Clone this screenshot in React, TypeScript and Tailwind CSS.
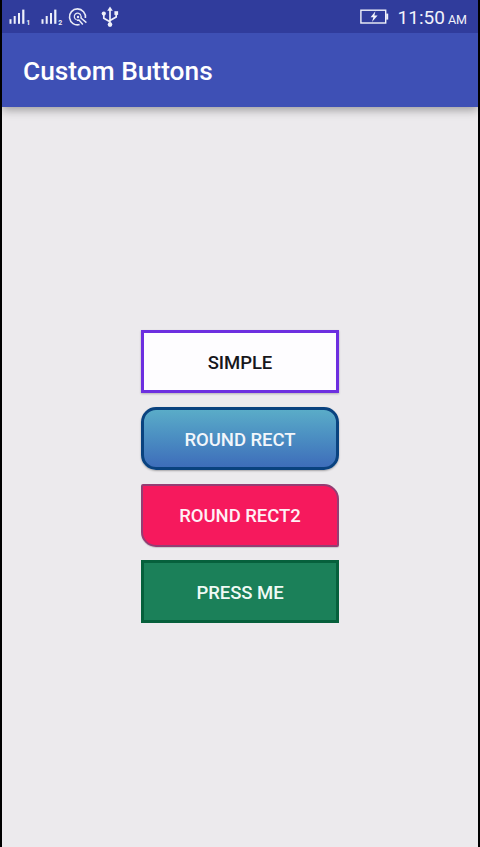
import React from "react";

function Signal({ slot }: { slot: string }) {
  return (
    <svg width="22" height="20" viewBox="0 0 22 20" className="block" fill="#eef0fa">
      <rect x="0.5" y="12.2" width="2" height="4.6" />
      <rect x="4.7" y="9" width="2" height="7.8" />
      <rect x="9" y="6" width="2" height="10.8" />
      <rect x="13.2" y="2.6" width="2.2" height="14.2" />
      <text x="17.2" y="17.8" fontSize="7" fontWeight="700" fontFamily="Roboto, sans-serif">
        {slot}
      </text>
    </svg>
  );
}

function CircleCursor() {
  return (
    <svg width="20" height="20" viewBox="0 0 20 20" className="block" fill="none" stroke="#e8eaf6">
      <path d="M11.6 17.6A8 8 0 1 1 17.4 11" strokeWidth="1.6" />
      <path d="M8.6 12.8A3.4 3.4 0 1 1 13 8.8" strokeWidth="1.2" />
      <circle cx="10" cy="10" r="1.2" fill="#e8eaf6" stroke="none" />
      <path d="M8.8 13.2L11 13L14.8 17.6M13.2 9.2L13 11L18.4 15.6" strokeWidth="1.5" />
    </svg>
  );
}

function Usb() {
  return (
    <svg width="18" height="22" viewBox="0 0 18 22" className="block" fill="#eef0fa" stroke="#eef0fa">
      <path d="M9 3V18M9 15.8L2.8 12.2V8M9 14.6L15.2 11V7" fill="none" strokeWidth="1.7" />
      <path d="M9 0.6L11.8 4.8H6.2Z" stroke="none" />
      <circle cx="2.8" cy="7.6" r="2.1" stroke="none" />
      <rect x="13.4" y="5.2" width="3.7" height="3.7" stroke="none" />
      <circle cx="9" cy="18.6" r="2.3" stroke="none" />
    </svg>
  );
}

function Battery() {
  return (
    <svg width="29" height="16" viewBox="0 0 29 16" className="block" fill="#f1f2fa">
      <rect x="0.9" y="1.2" width="24.8" height="12.8" fill="none" stroke="#f1f2fa" strokeWidth="1.4" />
      <rect x="26.2" y="4.6" width="2" height="6" />
      <path d="M15.4 2.2L10.6 8.3H13.4L12 13.1L17.6 6.4H14.4Z" />
    </svg>
  );
}

const base = "box-border block h-[63px] w-[198px] pt-[2px] text-center text-[18.5px] font-medium leading-[56px] tracking-[-0.05px]";

export default function App() {
  return (
    <div className="flex h-[847px] w-[480px] flex-col overflow-hidden border-x-2 border-black bg-[#eceaed] font-['Roboto',sans-serif]">
      <header className="shrink-0 shadow-[0_3px_9px_rgba(0,0,0,0.34)]">
        <div className="flex h-[33px] items-center justify-between bg-[#303c9c] pl-[7px] pr-[11px] text-[#f1f2fa]">
          <div className="flex items-center">
            <Signal slot="1" />
            <div className="w-[10px]" />
            <Signal slot="2" />
            <div className="w-[5px]" />
            <CircleCursor />
            <div className="w-[13px]" />
            <Usb />
          </div>
          <div className="flex items-center">
            <Battery />
            <div className="ml-[9px] flex items-baseline whitespace-nowrap pt-[1px] leading-none">
              <span className="text-[19px]">11:50</span>
              <span className="ml-[3px] text-[12.5px]">AM</span>
            </div>
          </div>
        </div>
        <div className="flex h-[74px] items-center bg-[#3e50b5] pl-[21px] pt-[2px]">
          <h1 className="text-[26.3px] font-medium leading-none text-white">Custom Buttons</h1>
        </div>
      </header>
      <main className="flex flex-1 flex-col items-center gap-[13.67px] pt-[223.3px]">
        <button className={`${base} border-[3px] border-[#6d2fe0] bg-[#fefdff] text-[#17171b] shadow-[0_1px_2px_rgba(0,0,0,0.25)]`}>
          SIMPLE
        </button>
        <button className={`${base} rounded-[15px] border-[3px] border-[#09427f] bg-linear-to-b from-[#5aacc8] to-[#3e6dba] text-[#f2f6fb] shadow-[0_1px_2px_rgba(0,0,0,0.3)]`}>
          ROUND RECT
        </button>
        <button className={`${base} rounded-[2px] rounded-tr-[15px] rounded-bl-[15px] border-[2.5px] border-[#943d73] bg-[#f6195d] text-[#fff0f5] shadow-[0_1px_1px_rgba(0,0,0,0.15)]`}>
          ROUND RECT2
        </button>
        <button className={`${base} border-[3px] border-[#06603c] bg-[#1b8059] text-[#f0faf5]`}>
          PRESS ME
        </button>
      </main>
    </div>
  );
}
